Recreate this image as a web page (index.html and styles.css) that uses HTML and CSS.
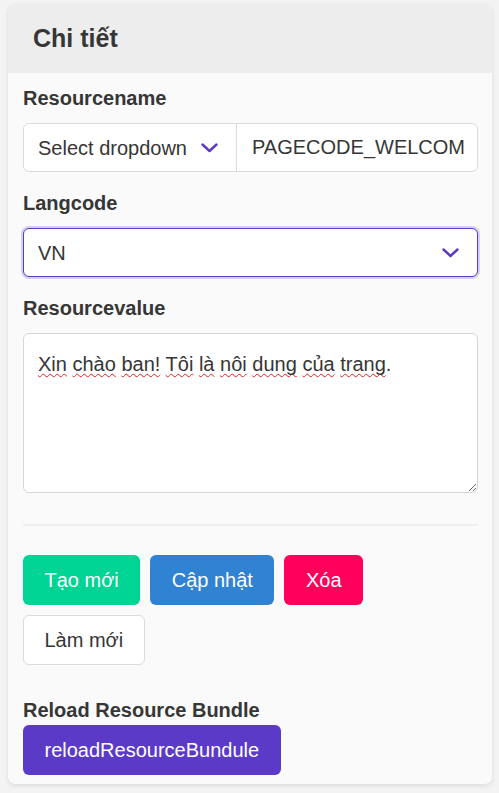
FILE: index.html
```html
<!DOCTYPE html>
<html lang="vi">
<head>
<meta charset="utf-8">
<title>Chi tiết</title>
<link rel="stylesheet" href="styles.css">
</head>
<body>
<div class="page">
  <div class="card">
    <div class="card-header">Chi tiết</div>
    <div class="card-body">
      <div class="field">
        <label class="label">Resourcename</label>
        <div class="addons">
          <div class="select-wrap select-left">
            <select class="select"><option>Select dropdown</option></select>
            <svg class="chev" width="17" height="10" viewBox="0 0 17 10"><polyline points="1.5,1.5 8.5,8 15.5,1.5" fill="none" stroke="#5a3ac6" stroke-width="2.4" stroke-linecap="round" stroke-linejoin="round"/></svg>
          </div>
          <input class="input input-right" type="text" value="PAGECODE_WELCOME">
        </div>
      </div>
      <div class="field">
        <label class="label">Langcode</label>
        <div class="select-wrap select-full">
          <select class="select focused"><option>VN</option></select>
          <svg class="chev" width="17" height="10" viewBox="0 0 17 10"><polyline points="1.5,1.5 8.5,8 15.5,1.5" fill="none" stroke="#5a3ac6" stroke-width="2.4" stroke-linecap="round" stroke-linejoin="round"/></svg>
        </div>
      </div>
      <div class="field field-last">
        <label class="label">Resourcevalue</label>
        <div class="textarea" role="textbox"><span class="sp">Xin</span> <span class="sp">chào</span> <span class="sp">ban!</span> <span class="sp">Tôi</span> <span class="sp">là</span> <span class="sp">nôi</span> <span class="sp">dung</span> <span class="sp">của</span> <span class="sp">trang</span>.</div>
      </div>
      <hr class="divider">
      <div class="buttons">
        <button class="btn btn-green">Tạo mới</button>
        <button class="btn btn-blue">Cập nhật</button>
        <button class="btn btn-red">Xóa</button>
        <button class="btn btn-white">Làm mới</button>
      </div>
      <div class="reload">
        <label class="label label-tight">Reload Resource Bundle</label>
        <button class="btn btn-purple">reloadResourceBundule</button>
      </div>
    </div>
  </div>
</div>
</body>
</html>
```

FILE: styles.css
```css
* { box-sizing: border-box; }
html, body { margin: 0; padding: 0; }
body {
  background: #f3f3f3;
  font-family: "Liberation Sans", Arial, sans-serif;
  color: #363636;
}
.page {
  padding: 4px 7px 8px 8px;
}
.card {
  background: #fafafa;
  border-radius: 7px;
  box-shadow: 0 2px 5px rgba(0,0,0,0.09), 0 0 1px rgba(0,0,0,0.06);
  overflow: hidden;
}
.card-header {
  background: #ededed;
  height: 69px;
  display: flex;
  align-items: center;
  padding-left: 25px;
  font-size: 25px;
  font-weight: 700;
  color: #363636;
}
.card-body {
  padding: 10px 14px 9px 15px;
}
.field { margin-bottom: 16px; }
.field-last { margin-bottom: 0; }
.label {
  display: block;
  font-size: 20px;
  font-weight: 700;
  line-height: 30px;
  margin-bottom: 10px;
  color: #363636;
}
.label-tight { margin-bottom: 0; }
.addons { display: flex; }
.select-wrap { position: relative; }
.select-left { width: 214px; flex: none; }
.select-full { width: 100%; }
.select {
  appearance: none;
  -webkit-appearance: none;
  width: 100%;
  height: 49px;
  font-family: inherit;
  font-size: 20px;
  color: #363636;
  background: #fff;
  border: 1px solid #dbdbdb;
  border-radius: 6px;
  padding: 0 50px 0 14px;
  outline: none;
}
.select-left .select { border-radius: 6px 0 0 6px; }
.select.focused {
  border-color: #5a3ac6;
  box-shadow: 0 0 0 2px rgba(90,58,198,0.22);
}
.chev {
  position: absolute;
  right: 19px;
  top: 20px;
  pointer-events: none;
}
.input {
  height: 49px;
  flex: 1;
  min-width: 0;
  margin-left: -1px;
  font-family: inherit;
  font-size: 20px;
  color: #363636;
  background: #fff;
  border: 1px solid #dbdbdb;
  border-radius: 0 6px 6px 0;
  padding: 0 12px 0 15px;
  outline: none;
}
.textarea {
  height: 160px;
  background: #fff;
  border: 1px solid #d6d6d6;
  border-radius: 6px;
  padding: 15px 14px;
  font-size: 20px;
  line-height: 30px;
  color: #363636;
  overflow: auto;
  resize: vertical;
}
.sp {
  text-decoration: underline wavy #e02020;
  text-decoration-thickness: 1.3px;
  text-underline-offset: 2px;
  text-decoration-skip-ink: none;
}
.divider {
  border: none;
  height: 2px;
  background: #efefef;
  margin: 31px 0 29px;
}
.buttons {
  display: flex;
  flex-wrap: wrap;
  gap: 10px;
  margin-bottom: 30px;
}
.btn {
  height: 50px;
  padding: 0 20.5px;
  font-family: inherit;
  font-size: 20px;
  border-radius: 6px;
  border: 1px solid transparent;
  color: #fff;
  cursor: pointer;
}
.btn-green { background: #00d494; }
.btn-blue { background: #3082d3; }
.btn-red { background: #ff005a; }
.btn-white { background: #fff; color: #363636; border-color: #dbdbdb; }
.btn-purple { background: #5a3ac6; }
```
